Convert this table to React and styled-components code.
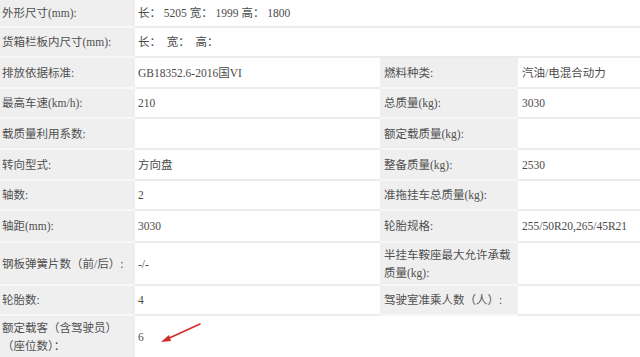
import React from "react";
import styled, { createGlobalStyle } from "styled-components";

const Global = createGlobalStyle`
  html, body { margin: 0; padding: 0; background: #fff; }
  body { font-family: "Liberation Serif", "Noto Sans CJK SC", serif; }
`;

const Table = styled.div`
  display: grid;
  grid-template-columns: 135px 245px 138px 1fr;
  grid-template-rows: 28px 30px 31px 30px 31px 31px 30px 32px 43px 30px 44px;
  width: 640px;
  font-size: 11.5px;
  color: #4a4a4a;
  overflow: hidden;
  height: 357px;
`;

const Label = styled.div`
  box-sizing: border-box;
  background: #efefef;
  border-bottom: 2px solid ${(p) => (p.$last ? "transparent" : "#f7f7f7")};
  padding: ${(p) => (p.$left ? "0 2px 0 2px" : "0 4px 0 4px")};
  display: flex;
  align-items: center;
  line-height: 18px;
  color: #505050;
`;

const Value = styled.div`
  box-sizing: border-box;
  background: #fff;
  border-bottom: 2px solid ${(p) => (p.$last ? "transparent" : "#ececec")};
  padding: 0 4px 0 ${(p) => (p.$right ? "4px" : "3px")};
  display: flex;
  align-items: center;
  grid-column: ${(p) => (p.$span ? `span ${p.$span}` : "auto")};
  position: relative;
  line-height: 18px;
  white-space: pre;
`;

const Arrow = styled.svg`
  position: absolute;
  left: 24px;
  top: 6px;
  width: 44px;
  height: 24px;
  overflow: visible;
`;

const rows = [
  { l: "外形尺寸(mm):", v: "长： 5205 宽： 1999 高： 1800", span: 3 },
  { l: "货箱栏板内尺寸(mm):", v: "长：  宽：  高：", span: 3 },
  { l: "排放依据标准:", v: "GB18352.6-2016国VI", l2: "燃料种类:", v2: "汽油/电混合动力" },
  { l: "最高车速(km/h):", v: "210", l2: "总质量(kg):", v2: "3030" },
  { l: "载质量利用系数:", v: "", l2: "额定载质量(kg):", v2: "" },
  { l: "转向型式:", v: "方向盘", l2: "整备质量(kg):", v2: "2530" },
  { l: "轴数:", v: "2", l2: "准拖挂车总质量(kg):", v2: "" },
  { l: "轴距(mm):", v: "3030", l2: "轮胎规格:", v2: "255/50R20,265/45R21" },
  { l: "钢板弹簧片数（前/后）:", v: "-/-", l2: "半挂车鞍座最大允许承载质量(kg):", v2: "" },
  { l: "轮胎数:", v: "4", l2: "驾驶室准乘人数（人）:", v2: "" },
];

export default function App() {
  return (
    <>
      <Global />
      <Table>
        {rows.map((r, i) => (
          <React.Fragment key={i}>
            <Label $left>{r.l}</Label>
            {r.span ? (
              <Value $span={r.span}>{r.v}</Value>
            ) : (
              <>
                <Value>{r.v}</Value>
                <Label>{r.l2}</Label>
                <Value $right>{r.v2}</Value>
              </>
            )}
          </React.Fragment>
        ))}
        <Label $left $last>
          <span>
            额定载客（含驾驶员）
            <br />
            （座位数）：
          </span>
        </Label>
        <Value $span={3} $last>
          6
          <Arrow viewBox="0 0 44 24">
            <line x1="41" y1="2" x2="6" y2="18" stroke="#d42a2a" strokeWidth="1.6" strokeLinecap="round" />
            <polygon points="2,20 10,13 12,19" fill="#d42a2a" />
          </Arrow>
        </Value>
      </Table>
    </>
  );
}
